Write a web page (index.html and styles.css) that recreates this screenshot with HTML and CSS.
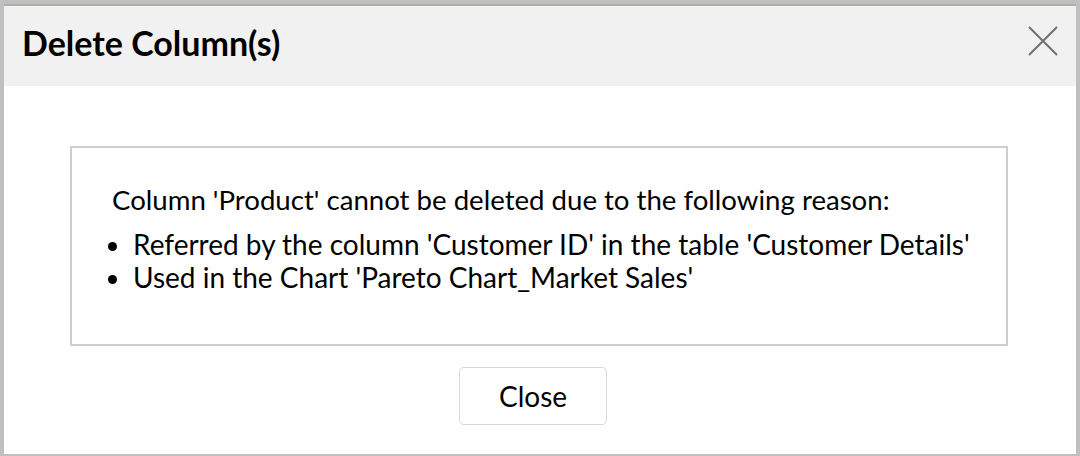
FILE: index.html
```html
<!DOCTYPE html>
<html>
<head>
<meta charset="utf-8">
<link rel="stylesheet" href="styles.css">
</head>
<body>
<div class="frame">
  <div class="dialog">
    <div class="header">
      <h1 class="title">Delete Column(s)</h1>
      <button class="close-x" aria-label="Close">
        <svg width="32" height="32" viewBox="0 0 32 32"><path d="M2 2 L30 30 M30 2 L2 30" stroke="#707070" stroke-width="2" fill="none"/></svg>
      </button>
    </div>
    <div class="body">
      <div class="message">
        <p class="lead">Column 'Product' cannot be deleted due to the following reason:</p>
        <ul class="reasons">
          <li>Referred by the column 'Customer ID' in the table 'Customer Details'</li>
          <li>Used in the Chart 'Pareto Chart_Market Sales'</li>
        </ul>
      </div>
      <div class="actions">
        <button class="btn">Close</button>
      </div>
    </div>
  </div>
</div>
</body>
</html>
```

FILE: styles.css
```css
html, body {
  margin: 0;
  padding: 0;
}
body {
  width: 1080px;
  height: 456px;
  background: #c0c0c0;
  font-family: Lato, "Open Sans", sans-serif;
  color: #000;
}
.frame {
  padding: 4px 4px 4px 4px;
  height: 456px;
  box-sizing: border-box;
}
.dialog {
  height: 100%;
  display: flex;
  flex-direction: column;
  background: #fff;
  border-top: 2px solid #aeb0a6;
}
.header {
  height: 80px;
  background: #f1f1f1;
  display: flex;
  align-items: center;
  justify-content: space-between;
  padding: 0 17px 0 18px;
}
.title {
  margin: -6px 0 0 0;
  font-size: 34px;
  font-weight: 700;
  line-height: 40px;
}
.close-x {
  border: 0;
  background: none;
  padding: 0;
  width: 32px;
  height: 32px;
  margin-top: -10px;
}
.close-x svg { display: block; }
.body {
  flex: 1;
  padding: 60px 68px 0 66px;
}
.message {
  border: 2px solid #cfcfcf;
  height: 200px;
  box-sizing: border-box;
  padding: 35px 20px 0 40px;
  font-size: 27.6px;
  white-space: nowrap;
}
.lead {
  margin: 0 0 12px 0;
  line-height: 33px;
}
.reasons {
  margin: 0;
  padding-left: 21px;
  font-size: 28px;
}
.reasons li {
  line-height: 33px;
}
.actions {
  display: flex;
  justify-content: center;
  padding-top: 21px;
  padding-right: 12px;
}
.btn {
  width: 148px;
  height: 58px;
  border: 1px solid #d8d8d8;
  border-radius: 5px;
  background: #fff;
  font-family: Lato, sans-serif;
  font-size: 28px;
  color: #000;
}
```
